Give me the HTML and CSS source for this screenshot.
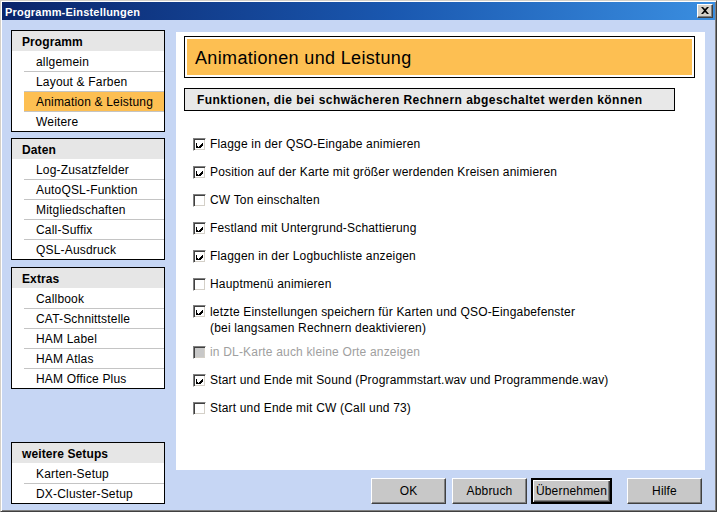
FILE: index.html
```html
<!DOCTYPE html>
<html>
<head>
<meta charset="utf-8">
<title>Programm-Einstellungen</title>
<link rel="stylesheet" href="styles.css">
</head>
<body>
<div class="window">
  <div class="titlebar">
    <span class="title">Programm-Einstellungen</span>
    <span class="close"><svg width="8" height="7" viewBox="0 0 8 7"><path d="M0 0h2l2 2 2-2h2L5 3.5 8 7H6L4 5 2 7H0l3-3.5z" fill="#000"/></svg></span>
  </div>
  <div class="body">
    <div class="sidebar">
      <div class="panel">
        <div class="panel-head">Programm</div>
        <div class="item">allgemein</div>
        <div class="item">Layout &amp; Farben</div>
        <div class="item active">Animation &amp; Leistung</div>
        <div class="item">Weitere</div>
      </div>
      <div class="panel">
        <div class="panel-head">Daten</div>
        <div class="item">Log-Zusatzfelder</div>
        <div class="item">AutoQSL-Funktion</div>
        <div class="item">Mitgliedschaften</div>
        <div class="item">Call-Suffix</div>
        <div class="item">QSL-Ausdruck</div>
      </div>
      <div class="panel extras">
        <div class="panel-head">Extras</div>
        <div class="item">Callbook</div>
        <div class="item">CAT-Schnittstelle</div>
        <div class="item">HAM Label</div>
        <div class="item">HAM Atlas</div>
        <div class="item">HAM Office Plus</div>
      </div>
      <div class="spacer"></div>
      <div class="panel">
        <div class="panel-head">weitere Setups</div>
        <div class="item">Karten-Setup</div>
        <div class="item">DX-Cluster-Setup</div>
      </div>
    </div>
    <div class="main">
      <div class="content">
        <div class="heading"><div class="heading-inner">Animationen und Leistung</div></div>
        <div class="subheading">Funktionen, die bei schwächeren Rechnern abgeschaltet werden können</div>
        <div class="options">
          <div class="opt"><span class="cb checked"></span><span class="lbl">Flagge in der QSO-Eingabe animieren</span></div>
          <div class="opt"><span class="cb checked"></span><span class="lbl">Position auf der Karte mit größer werdenden Kreisen animieren</span></div>
          <div class="opt"><span class="cb"></span><span class="lbl">CW Ton einschalten</span></div>
          <div class="opt"><span class="cb checked"></span><span class="lbl">Festland mit Untergrund-Schattierung</span></div>
          <div class="opt"><span class="cb checked"></span><span class="lbl">Flaggen in der Logbuchliste anzeigen</span></div>
          <div class="opt"><span class="cb"></span><span class="lbl">Hauptmenü animieren</span></div>
          <div class="opt multi"><span class="cb checked"></span><span class="lbl">letzte Einstellungen speichern für Karten und QSO-Eingabefenster<br>(bei langsamen Rechnern deaktivieren)</span></div>
          <div class="opt disabled"><span class="cb"></span><span class="lbl">in DL-Karte auch kleine Orte anzeigen</span></div>
          <div class="opt"><span class="cb checked"></span><span class="lbl">Start und Ende mit Sound (Programmstart.wav und Programmende.wav)</span></div>
          <div class="opt"><span class="cb"></span><span class="lbl">Start und Ende mit CW (Call und 73)</span></div>
        </div>
      </div>
      <div class="buttons">
        <button class="btn b-ok">OK</button>
        <button class="btn b-abbruch">Abbruch</button>
        <button class="btn b-default">Übernehmen</button>
        <button class="btn b-hilfe">Hilfe</button>
      </div>
    </div>
  </div>
</div>
</body>
</html>
```

FILE: styles.css
```css
html, body {
  margin: 0;
  padding: 0;
  background: #c6d6f4;
}
body {
  font-family: "Liberation Sans", Arial, sans-serif;
  font-size: 12px;
  letter-spacing: 0.18px;
  color: #000;
}
.window {
  width: 717px;
  height: 512px;
  box-sizing: border-box;
  border: 1px solid;
  border-color: #d4d0c8 #404040 #404040 #d4d0c8;
  padding: 1px;
  box-shadow: inset 1px 1px #ffffff, inset -1px -1px #808080;
  background: #c6d6f4;
  display: flex;
  flex-direction: column;
}
.titlebar {
  height: 18px;
  flex: none;
  display: flex;
  align-items: center;
  justify-content: space-between;
  padding: 0 2px 0 3px;
  background: linear-gradient(to right, #0a246a 0%, #1a58b0 55%, #3a8ee0 100%);
  color: #fff;
}
.title {
  font-weight: bold;
  font-size: 11px;
  letter-spacing: 0.2px;
  padding-top: 1px;
}
.close {
  width: 16px;
  height: 14px;
  box-sizing: border-box;
  background: #d4d0c8;
  border: 1px solid;
  border-color: #ffffff #404040 #404040 #ffffff;
  box-shadow: inset -1px -1px #808080;
  display: flex;
  align-items: center;
  justify-content: center;
}
.close svg { display: block; margin-top: -1px; }
.body {
  flex: 1;
  display: flex;
  padding: 10px 10px 6px 9px;
  gap: 11px;
  min-height: 0;
}
.sidebar {
  width: 154px;
  flex: none;
  display: flex;
  flex-direction: column;
  gap: 6px;
}
.spacer { flex: 1; }
.panel {
  border: 1px solid #000;
  background: #fff;
}
.panel.extras { margin-top: 1px; }
.panel-head {
  height: 20px;
  line-height: 23px;
  background: #e6e6e6;
  font-weight: bold;
  padding-left: 10px;
  letter-spacing: 0.1px;
}
.item {
  height: 20px;
  line-height: 23px;
  margin-left: 12px;
  padding-left: 12px;
  box-sizing: border-box;
}
.item + .item {
  border-top: 1px solid #c4c4c4;
  line-height: 21px;
}
.item.active {
  background: #fdbf52;
}
.main {
  flex: 1;
  display: flex;
  flex-direction: column;
  margin-top: 2px;
}
.content {
  height: 438px;
  background: #fff;
  padding: 4px 10px 0 8px;
  box-sizing: border-box;
}
.heading {
  border: 1px solid #000;
  padding: 2px;
  background: #fff;
}
.heading-inner {
  background: #fdbf52;
  height: 36px;
  line-height: 39px;
  padding-left: 8px;
  font-size: 18px;
  letter-spacing: 0.35px;
}
.subheading {
  margin-top: 10px;
  width: 491px;
  height: 23px;
  box-sizing: border-box;
  border: 1px solid #000;
  background: #e8e8e8;
  font-weight: bold;
  line-height: 22px;
  padding-left: 12px;
  letter-spacing: 0.45px;
}
.options {
  margin-top: 19px;
  padding-left: 9px;
}
.opt {
  height: 28px;
  display: flex;
  align-items: center;
  gap: 4px;
}
.opt.multi {
  height: 40px;
  align-items: flex-start;
  padding-top: 6px;
  box-sizing: border-box;
}
.opt.multi .cb { margin-top: 1px; }
.lbl { line-height: 16px; }
.opt.disabled .lbl { color: #a0a0a0; }
.cb {
  width: 13px;
  height: 13px;
  flex: none;
  box-sizing: border-box;
  border: 1px solid;
  border-color: #808080 #ffffff #ffffff #808080;
  box-shadow: inset 1px 1px #404040, inset -1px -1px #d4d0c8;
  background: #fff;
  position: relative;
}
.cb.checked::after {
  content: "";
  position: absolute;
  left: 2px;
  top: 2px;
  width: 7px;
  height: 7px;
  background: url("data:image/svg+xml;utf8,<svg xmlns='http://www.w3.org/2000/svg' width='7' height='7' shape-rendering='crispEdges'><path d='M0 2h1v3h1v1h1v-1h1v-1h1v-1h1v-1h1v3h-1v1h-1v1h-1v1h-1v1h-1v-1h-1v-1h-1v-1h-1z' fill='black'/></svg>") no-repeat;
}
.opt.disabled .cb {
  background: #c8c8c8;
}
.buttons {
  margin-top: 8px;
  height: 26px;
  display: flex;
  justify-content: flex-end;
  padding-right: 3px;
}
.btn {
  font-family: "Liberation Sans", Arial, sans-serif;
  font-size: 12px;
  letter-spacing: 0.18px;
  color: #000;
  width: 75px;
  height: 26px;
  margin: 0;
  padding: 0;
  background: #c8c8c8;
  border: 1px solid;
  border-color: #ffffff #404040 #404040 #ffffff;
  box-shadow: inset -1px -1px #808080;
  box-sizing: border-box;
}
.b-abbruch { margin-left: 6px; }
.b-default {
  width: 81px;
  margin-left: 4px;
  border: 2px solid #000;
  box-shadow: inset 1px 1px #ffffff, inset -1px -1px #404040, inset -2px -2px #808080;
}
.b-hilfe { margin-left: 15px; }
```
